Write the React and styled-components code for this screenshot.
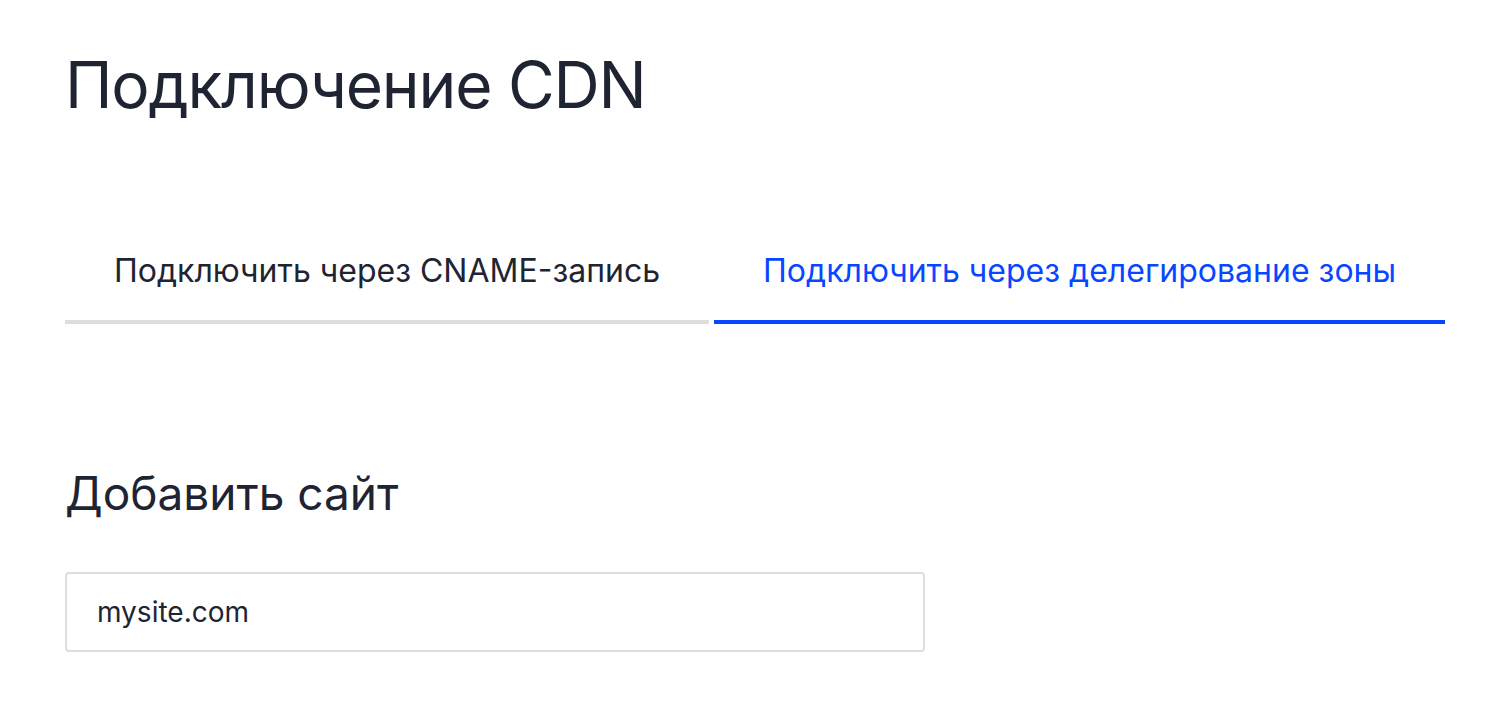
import React, { useState } from "react";
import styled, { createGlobalStyle } from "styled-components";

const GlobalStyle = createGlobalStyle`
  body {
    margin: 0;
    background: #ffffff;
    font-family: Inter, "Noto Sans", sans-serif;
    color: #1f2432;
  }
`;

const Page = styled.div`
  padding: 46px 40px 0 65px;
`;

const Title = styled.h1`
  margin: 0;
  font-size: 64px;
  font-weight: 400;
  line-height: 78px;
  letter-spacing: -1.2px;
  color: #1f2432;
`;

const Tabs = styled.div`
  display: flex;
  gap: 5px;
  margin-top: 97px;
`;

const Tab = styled.button`
  flex-shrink: 0;
  box-sizing: border-box;
  border: none;
  background: none;
  padding: 0 49px;
  height: 103px;
  white-space: nowrap;
  font-family: inherit;
  font-size: 32px;
  color: ${(p) => (p.$active ? "#0846ff" : "#1f2432")};
  border-bottom: 4px solid ${(p) => (p.$active ? "#0846ff" : "#dddddd")};
  cursor: pointer;
`;

const SectionTitle = styled.h2`
  margin: 141px 0 0;
  font-size: 46px;
  font-weight: 400;
  line-height: 56px;
  color: #1f2432;
`;

const Input = styled.input`
  display: block;
  box-sizing: border-box;
  margin-top: 51px;
  width: 860px;
  height: 80px;
  padding: 0 30px;
  border: 2px solid #dedede;
  border-radius: 4px;
  font-family: inherit;
  font-size: 28px;
  color: #1f2432;
  outline: none;
`;

const tabs = ["Подключить через CNAME-запись", "Подключить через делегирование зоны"];

export default function App() {
  const [active, setActive] = useState(1);
  return (
    <>
      <GlobalStyle />
      <Page>
        <Title>Подключение CDN</Title>
        <Tabs>
          {tabs.map((t, i) => (
            <Tab key={i} $active={active === i} onClick={() => setActive(i)}>
              {t}
            </Tab>
          ))}
        </Tabs>
        <SectionTitle>Добавить сайт</SectionTitle>
        <Input defaultValue="mysite.com" />
      </Page>
    </>
  );
}
